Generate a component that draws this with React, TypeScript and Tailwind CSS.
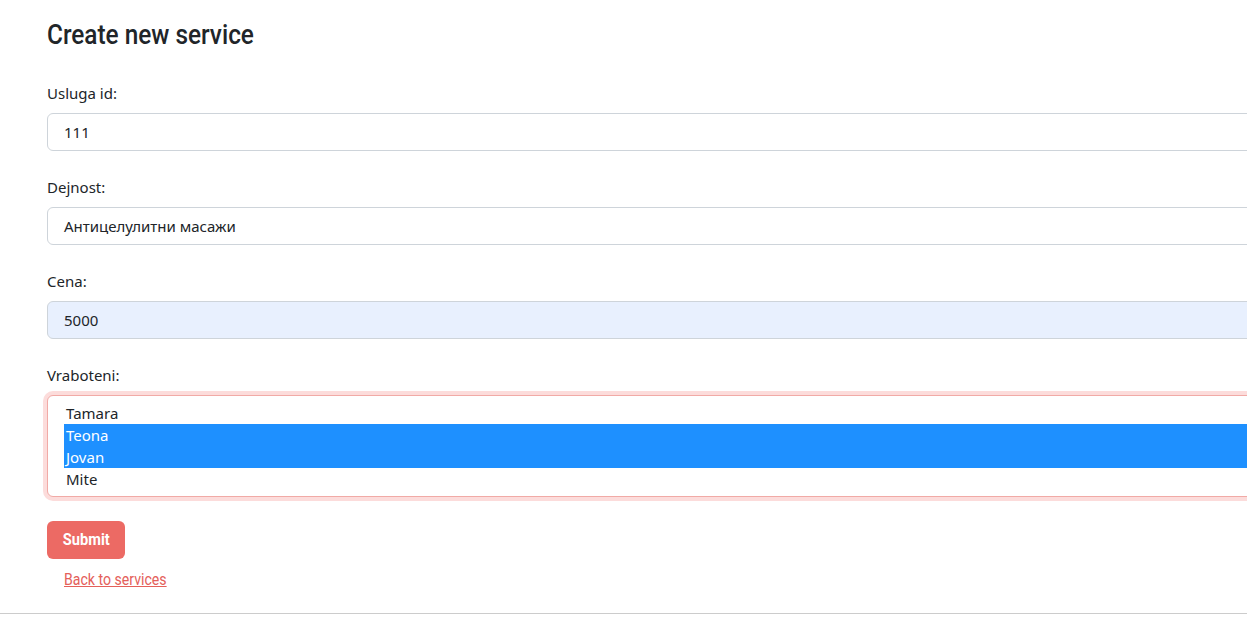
import React from "react";

function Field({ label, value, autofill }: { label: string; value: string; autofill?: boolean }) {
  return (
    <div className="flex flex-col">
      <label className="text-[15px] leading-[22px] text-[#212529] mb-[9px]">{label}</label>
      <div
        className={
          "w-[1300px] h-[38px] border border-[#ced4da] rounded-[6px] flex items-center pl-[16px] text-[15px] text-[#212529] " +
          (autofill ? "bg-[#e8f0fe]" : "bg-white")
        }
      >
        {value}
      </div>
    </div>
  );
}

export default function App() {
  const workers = ["Tamara", "Teona", "Jovan", "Mite"];
  const selected = ["Teona", "Jovan"];

  return (
    <div className="w-full h-[625px] overflow-hidden bg-white flex flex-col font-['Noto_Sans','Open_Sans',sans-serif]">
      <div className="flex-1 pl-[47px] pt-[15px]">
        <h1 className="text-[28px] leading-[40px] text-[#212529] font-medium mb-[27px] font-['Roboto',sans-serif]">
          <span className="inline-block origin-left scale-x-[0.87]">Create new service</span>
        </h1>

        <div className="flex flex-col gap-[25px]">
          <Field label="Usluga id:" value="111" />
          <Field label="Dejnost:" value="Антицелулитни масажи" />
          <Field label="Cena:" value="5000" autofill />

          <div className="flex flex-col">
            <label className="text-[15px] leading-[22px] text-[#212529] mb-[9px]">Vraboteni:</label>
            <div className="w-[1300px] h-[102px] border border-[#f1aaa6] rounded-[6px] ring-4 ring-[#fcdcdb] bg-white pl-[16px] pt-[6px]">
              {workers.map(w => (
                <div
                  key={w}
                  className={
                    "h-[22px] leading-[22px] pl-[2px] text-[15px] " +
                    (selected.includes(w) ? "bg-[#1e90ff] text-white" : "text-[#212529]")
                  }
                >
                  {w}
                </div>
              ))}
            </div>
          </div>
        </div>

        <button className="mt-[24px] h-[38px] w-[78px] rounded-[6px] bg-[#ec6a64] text-white text-[17px] font-bold font-['Roboto',sans-serif]">
          <span className="inline-block scale-x-[0.86]">Submit</span>
        </button>

        <div className="pl-[17px] mt-[9px] leading-[22px]">
          <a href="#" className="inline-block origin-left scale-x-[0.83] text-[17px] text-[#e4605a] underline font-['Roboto',sans-serif]">
            Back to services
          </a>
        </div>
      </div>
      <div className="border-t border-[#cccccc] h-[12px]" />
    </div>
  );
}
